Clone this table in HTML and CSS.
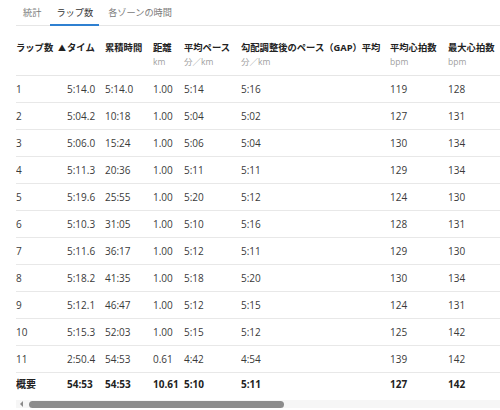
FILE: index.html
```html
<!DOCTYPE html>
<html lang="ja">
<head>
<meta charset="utf-8">
<title>ラップ数</title>
<link rel="stylesheet" href="styles.css">
</head>
<body>
<div class="page">
  <nav class="tabs">
    <span class="tab">統計</span>
    <span class="tab active">ラップ数</span>
    <span class="tab">各ゾーンの時間</span>
  </nav>
  <div class="scroller">
    <table class="laps">
      <colgroup>
        <col class="c1"><col class="c2"><col class="c3"><col class="c4"><col class="c5"><col class="c6"><col class="c7"><col class="c8"><col class="c9">
      </colgroup>
      <thead>
        <tr>
          <th>ラップ数</th>
          <th><span class="sorted"><span class="arrow">▲</span>タイム</span></th>
          <th>累積時間</th>
          <th>距離<span class="unit">km</span></th>
          <th>平均ペース<span class="unit">分／km</span></th>
          <th>勾配調整後のペース（GAP）平均<span class="unit">分／km</span></th>
          <th>平均心拍数<span class="unit">bpm</span></th>
          <th>最大心拍数<span class="unit">bpm</span></th>
          <th></th>
        </tr>
      </thead>
      <tbody>
        <tr><td>1</td><td>5:14.0</td><td>5:14.0</td><td>1.00</td><td>5:14</td><td>5:16</td><td>119</td><td>128</td><td></td></tr>
        <tr><td>2</td><td>5:04.2</td><td>10:18</td><td>1.00</td><td>5:04</td><td>5:02</td><td>127</td><td>131</td><td></td></tr>
        <tr><td>3</td><td>5:06.0</td><td>15:24</td><td>1.00</td><td>5:06</td><td>5:04</td><td>130</td><td>134</td><td></td></tr>
        <tr><td>4</td><td>5:11.3</td><td>20:36</td><td>1.00</td><td>5:11</td><td>5:11</td><td>129</td><td>134</td><td></td></tr>
        <tr><td>5</td><td>5:19.6</td><td>25:55</td><td>1.00</td><td>5:20</td><td>5:12</td><td>124</td><td>130</td><td></td></tr>
        <tr><td>6</td><td>5:10.3</td><td>31:05</td><td>1.00</td><td>5:10</td><td>5:16</td><td>128</td><td>131</td><td></td></tr>
        <tr><td>7</td><td>5:11.6</td><td>36:17</td><td>1.00</td><td>5:12</td><td>5:11</td><td>129</td><td>130</td><td></td></tr>
        <tr><td>8</td><td>5:18.2</td><td>41:35</td><td>1.00</td><td>5:18</td><td>5:20</td><td>130</td><td>134</td><td></td></tr>
        <tr><td>9</td><td>5:12.1</td><td>46:47</td><td>1.00</td><td>5:12</td><td>5:15</td><td>124</td><td>131</td><td></td></tr>
        <tr><td>10</td><td>5:15.3</td><td>52:03</td><td>1.00</td><td>5:15</td><td>5:12</td><td>125</td><td>142</td><td></td></tr>
        <tr><td>11</td><td>2:50.4</td><td>54:53</td><td>0.61</td><td>4:42</td><td>4:54</td><td>139</td><td>142</td><td></td></tr>
      </tbody>
      <tfoot>
        <tr><td>概要</td><td>54:53</td><td>54:53</td><td>10.61</td><td>5:10</td><td>5:11</td><td>127</td><td>142</td><td></td></tr>
      </tfoot>
    </table>
  </div>
  <div class="scrollbar">
    <span class="scroll-arrow"></span>
    <span class="thumb"></span>
  </div>
</div>
</body>
</html>
```
FILE: styles.css
```css
html, body {
  margin: 0;
  padding: 0;
  background: #fff;
}
body {
  font-family: "Open Sans", "Noto Sans CJK JP", sans-serif;
  font-size: 10px;
  color: #3a3a3a;
  width: 500px;
  height: 410px;
  overflow: hidden;
}
.page {
  padding-left: 16px;
}
.tabs {
  display: flex;
  height: 25px;
  border-bottom: 1px solid #e6e6e6;
  gap: 3px;
  padding-left: 1px;
}
.tab {
  padding: 0 6px;
  line-height: 25px;
  color: #7a7a7a;
  font-size: 9.2px;
  border-bottom: 2px solid transparent;
  height: 24px;
}
.tab.active {
  color: #333;
  border-bottom-color: #2f80d1;
}
.scroller {
  overflow: hidden;
  width: 484px;
}
.laps {
  border-collapse: collapse;
  table-layout: fixed;
  width: 900px;
}
.c1 { width: 51px; }
.c2 { width: 38px; }
.c3 { width: 48px; }
.c4 { width: 31px; }
.c5 { width: 57px; }
.c6 { width: 149px; }
.c7 { width: 58px; }
.c8 { width: 80px; }
.c9 { width: 388px; }
.laps th {
  text-align: left;
  vertical-align: top;
  font-weight: 700;
  font-size: 9.3px;
  color: #222;
  padding: 15px 0 6px 0;
  line-height: 14px;
  white-space: nowrap;
  border-bottom: 1px solid #e6e6e6;
}
.unit {
  display: block;
  font-weight: 400;
  font-size: 8.5px;
  color: #a0a0a0;
  line-height: 14px;
}
.sorted {
  position: relative;
}
.arrow {
  position: absolute;
  left: -9px;
  top: 0;
  font-size: 8px;
}
.laps td {
  padding: 0;
  height: 26px;
  line-height: 14px;
  white-space: nowrap;
  border-bottom: 1px solid #e8e8e8;
}
.laps tfoot td {
  height: 22px;
  font-weight: 700;
  color: #222;
  border-bottom: none;
}
.scrollbar {
  margin-top: 5px;
  height: 8px;
  background: #f6f6f6;
  display: flex;
  align-items: center;
  gap: 6px;
  padding-left: 4px;
}
.scroll-arrow {
  width: 0;
  height: 0;
  border-top: 3px solid transparent;
  border-bottom: 3px solid transparent;
  border-right: 3px solid #8a8a8a;
}
.thumb {
  width: 255px;
  height: 7px;
  border-radius: 4px;
  background: #8c8c8c;
}
```
